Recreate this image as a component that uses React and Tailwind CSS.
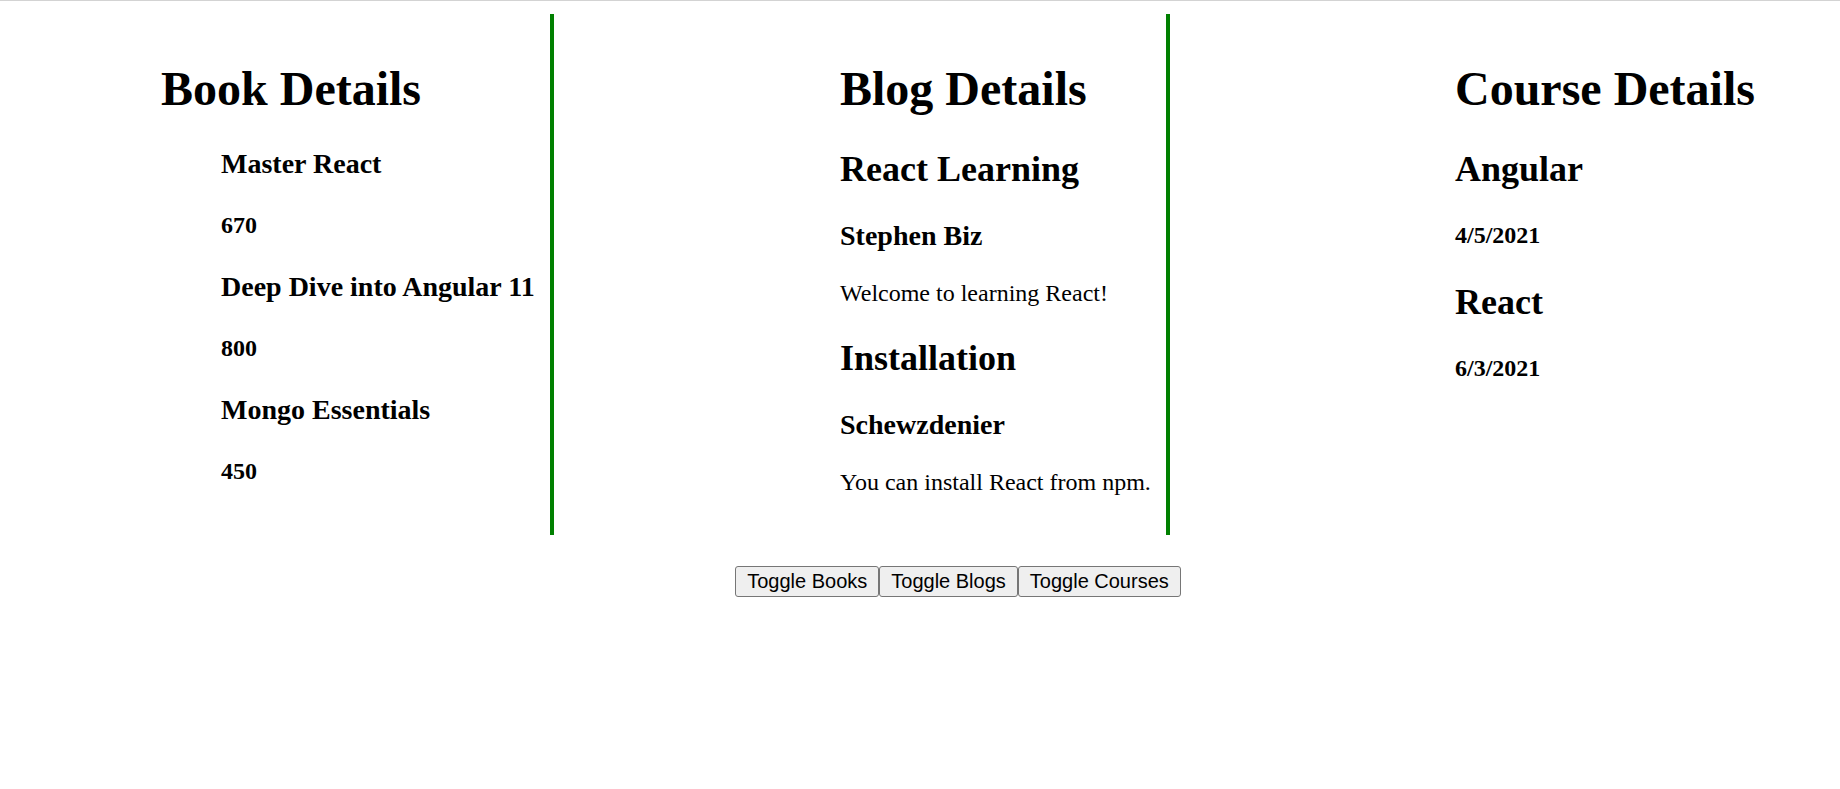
import React, { useState } from 'react';

const books = [
    { id: 1, bname: 'Master React', price: 670 },
    { id: 2, bname: 'Deep Dive into Angular 11', price: 800 },
    { id: 3, bname: 'Mongo Essentials', price: 450 },
];

const blogs = [
    { id: 1, title: 'React Learning', author: 'Stephen Biz', body: 'Welcome to learning React!' },
    { id: 2, title: 'Installation', author: 'Schewzdenier', body: 'You can install React from npm.' },
];

const courses = [
    { id: 1, cname: 'Angular', date: '4/5/2021' },
    { id: 2, cname: 'React', date: '6/3/2021' },
];

const BookDetails = () => (
    <div className="w-[542px] shrink-0 pl-[149px] py-[15px] border-r-[4px] border-[#008000]">
        <h1 className="text-[48px] font-bold my-[32px]">Book Details</h1>
        <ul className="pl-[60px] list-none">
            {books.map((b) => (
                <li key={b.id}>
                    <h3 className="text-[28px] font-bold my-[28px]">{b.bname}</h3>
                    <h4 className="text-[24px] font-bold my-[32px]">{b.price}</h4>
                </li>
            ))}
        </ul>
    </div>
);

const BlogDetails = () => (
    <div className="w-[616px] shrink-0 pl-[286px] py-[15px] border-r-[4px] border-[#008000]">
        <h1 className="text-[48px] font-bold my-[32px]">Blog Details</h1>
        {blogs.map((b) => (
            <div key={b.id}>
                <h2 className="text-[36px] font-bold my-[30px]">{b.title}</h2>
                <h3 className="text-[28px] font-bold my-[28px]">{b.author}</h3>
                <p className="text-[24px] my-[24px]">{b.body}</p>
            </div>
        ))}
    </div>
);

const CourseDetails = () => (
    <div className="flex-1 pl-[285px] py-[15px]">
        <h1 className="text-[48px] font-bold my-[32px]">Course Details</h1>
        {courses.map((c) => (
            <div key={c.id}>
                <h2 className="text-[36px] font-bold my-[30px]">{c.cname}</h2>
                <h4 className="text-[24px] font-bold my-[32px]">{c.date}</h4>
            </div>
        ))}
    </div>
);

export default function App() {
    const [showBooks, setShowBooks] = useState(true);
    const [showBlogs, setShowBlogs] = useState(true);
    const [showCourses, setShowCourses] = useState(true);

    const btn = "h-[31px] px-[11px] bg-[#efefef] border border-[#767676] rounded-[3px] text-[20px] leading-[23px] text-black font-['Liberation_Sans',Arial,sans-serif]";

    return (
        <div className="min-h-screen bg-white border-t border-[#d3d3d3] px-[12px] pt-[13px] text-black leading-[normal] font-['Liberation_Serif','Times_New_Roman',serif]">
            {/* Columns */}
            <div className="flex">
                {showBooks && <BookDetails />}
                {showBlogs && <BlogDetails />}
                {showCourses && <CourseDetails />}
            </div>

            {/* Toggles */}
            <div className="flex justify-center pl-[76px] mt-[31px]">
                <button className={btn} onClick={() => setShowBooks(!showBooks)}>Toggle Books</button>
                <button className={btn} onClick={() => setShowBlogs(!showBlogs)}>Toggle Blogs</button>
                <button className={btn} onClick={() => setShowCourses(!showCourses)}>Toggle Courses</button>
            </div>
        </div>
    );
}
